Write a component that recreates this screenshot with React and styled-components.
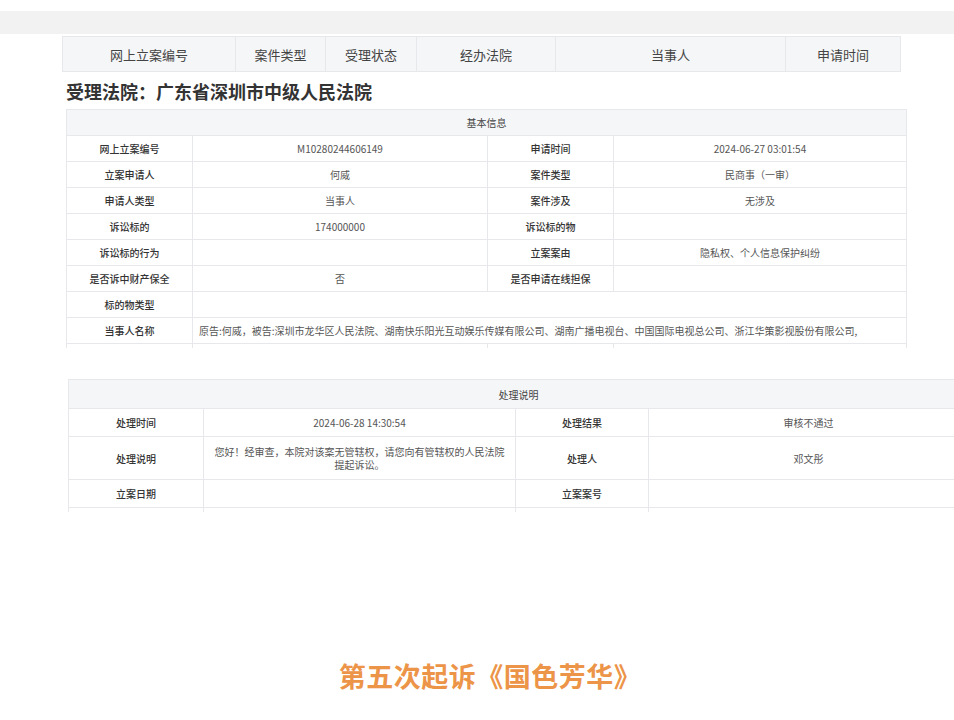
import React from "react";
import styled, { createGlobalStyle } from "styled-components";

const Global = createGlobalStyle`
  html, body { margin: 0; padding: 0; background: #fff; }
  body { font-family: "Noto Sans CJK SC", "Liberation Sans", sans-serif; color: #333; }
`;
const Page = styled.div`width: 954px; height: 720px; overflow: hidden; padding-top: 11px; box-sizing: border-box;`;
const Band = styled.div`height: 23px; background: #f2f2f2;`;
const Body = styled.div`display: flex; flex-direction: column; padding-top: 2px;`;
const Table = styled.table`
  border-collapse: collapse; table-layout: fixed;
  margin-left: ${p => p.$left}px; width: ${p => p.$width}px;
  td, th { border: 1px solid #e6e8eb; text-align: center; padding: 0 6px; font-weight: normal; }
`;
const HeadTable = styled(Table)`
  th { height: 34px; background: #f5f6f8; font-size: 13px; color: #444; }
  td { height: 0; border-bottom: none; }
`;
const Title = styled.h2`margin: 7px 0 6px 66px; font-size: 18px; font-weight: 700; color: #333; line-height: 24px;`;
const InfoTable = styled(Table)`
  font-size: 10px; color: #555;
  th.head { background: #f5f6f8; height: ${p => p.$headH}px; font-size: 10px; color: #444; }
  td { height: ${p => p.$rowH}px; line-height: 13px; }
  td.label { color: #333; font-weight: 500; }
  td.left { text-align: left; }
  tr.stub td { height: 4px; border-bottom: none; }
`;
const Footer = styled.div`
  margin-top: ${p => p.$mt}px; text-align: center; padding-left: 26px;
  font-size: 27px; font-weight: 700; color: #ec9448; letter-spacing: 0.5px;
`;

export default function App() {
  return (
    <Page>
      <Global />
      <Band />
      <Body>
        <HeadTable $left={62} $width={838}>
          <colgroup><col width="173"/><col width="90"/><col width="91"/><col width="139"/><col width="230"/><col width="115"/></colgroup>
          <thead><tr><th>网上立案编号</th><th>案件类型</th><th>受理状态</th><th>经办法院</th><th>当事人</th><th>申请时间</th></tr></thead>
          <tbody><tr><td/><td/><td/><td/><td/><td/></tr></tbody>
        </HeadTable>
        <Title>受理法院：广东省深圳市中级人民法院</Title>
        <InfoTable $left={66} $width={840} $headH={25} $rowH={25}>
          <colgroup><col width="126"/><col width="295"/><col width="126"/><col width="293"/></colgroup>
          <thead><tr><th className="head" colSpan={4}>基本信息</th></tr></thead>
          <tbody>
            <tr><td className="label">网上立案编号</td><td>M10280244606149</td><td className="label">申请时间</td><td>2024-06-27 03:01:54</td></tr>
            <tr><td className="label">立案申请人</td><td>何威</td><td className="label">案件类型</td><td>民商事（一审）</td></tr>
            <tr><td className="label">申请人类型</td><td>当事人</td><td className="label">案件涉及</td><td>无涉及</td></tr>
            <tr><td className="label">诉讼标的</td><td>174000000</td><td className="label">诉讼标的物</td><td/></tr>
            <tr><td className="label">诉讼标的行为</td><td/><td className="label">立案案由</td><td>隐私权、个人信息保护纠纷</td></tr>
            <tr><td className="label">是否诉中财产保全</td><td>否</td><td className="label">是否申请在线担保</td><td/></tr>
            <tr><td className="label">标的物类型</td><td colSpan={3}/></tr>
            <tr><td className="label">当事人名称</td><td className="left" colSpan={3}>原告:何威，被告:深圳市龙华区人民法院、湖南快乐阳光互动娱乐传媒有限公司、湖南广播电视台、中国国际电视总公司、浙江华策影视股份有限公司,</td></tr>
            <tr className="stub"><td/><td/><td/><td/></tr>
          </tbody>
        </InfoTable>
        <div style={{ height: 31 }} />
        <InfoTable $left={68} $width={900} $headH={28} $rowH={27}>
          <colgroup><col width="135"/><col width="312"/><col width="133"/><col width="320"/></colgroup>
          <thead><tr><th className="head" colSpan={4}>处理说明</th></tr></thead>
          <tbody>
            <tr><td className="label">处理时间</td><td>2024-06-28 14:30:54</td><td className="label">处理结果</td><td>审核不通过</td></tr>
            <tr><td className="label" style={{ height: 42 }}>处理说明</td><td>您好！经审查，本院对该案无管辖权，请您向有管辖权的人民法院提起诉讼。</td><td className="label">处理人</td><td>邓文彤</td></tr>
            <tr><td className="label">立案日期</td><td/><td className="label">立案案号</td><td/></tr>
            <tr className="stub"><td/><td/><td/><td/></tr>
          </tbody>
        </InfoTable>
        <Footer $mt={144}>第五次起诉《国色芳华》</Footer>
      </Body>
    </Page>
  );
}
